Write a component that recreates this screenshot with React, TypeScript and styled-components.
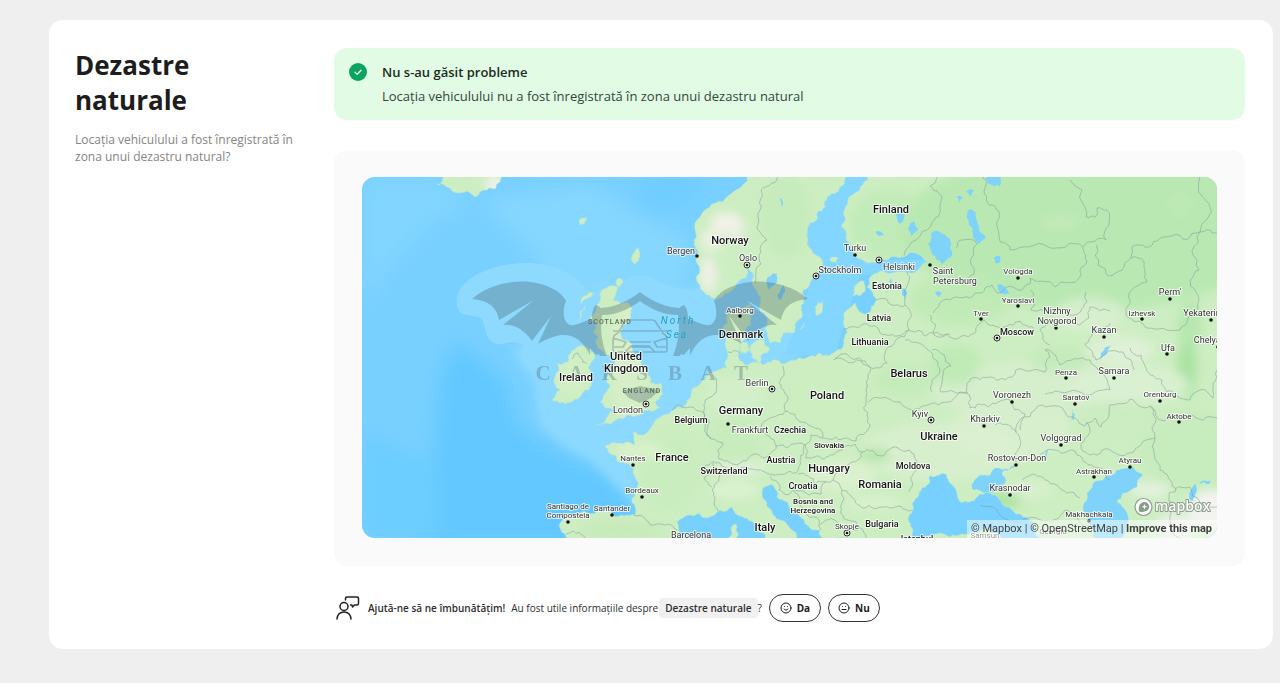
import React from 'react';
import styled, { createGlobalStyle } from 'styled-components';
import { Smile, Meh } from 'lucide-react';

type Point = [number, number];

const GlobalStyle = createGlobalStyle`
  *, *::before, *::after { box-sizing: border-box; }
  body {
    margin: 0;
    background: #efefef;
    color: #1d1d1d;
    font-family: 'Open Sans', 'Noto Sans', sans-serif;
  }
`;

const Page = styled.main`
  padding: 20px 7px 34px 49px;
`;

const Card = styled.section`
  display: grid;
  grid-template-columns: 224px minmax(0, 1fr);
  column-gap: 35px;
  padding: 28px 28px 27px 26px;
  background: #fff;
  border-radius: 14px;
`;

const Title = styled.h1`
  margin: 0 0 13px;
  max-width: 160px;
  font-size: 26px;
  line-height: 35px;
  font-weight: 700;
`;

const Intro = styled.p`
  margin: 0;
  font-size: 12px;
  line-height: 17px;
  color: #858585;
`;

const Alert = styled.div`
  display: flex;
  gap: 15px;
  padding: 12px 15px;
  border-radius: 13px;
  background: #e2fbe5;
  font-size: 13px;
  line-height: 24px;
`;

const AlertIcon = styled.svg`
  flex: none;
  width: 18px;
  height: 18px;
  margin-top: 3px;
`;

const AlertTitle = styled.h2`
  margin: 0;
  font-size: 13px;
  font-weight: 600;
  color: #1c2b21;
`;

const AlertText = styled.p`
  margin: 0;
  color: #33453a;
`;

const MapPanel = styled.div`
  margin-top: 30px;
  padding: 27px 28px 28px;
  border-radius: 13px;
  background: #fafafa;
`;

const MapFrame = styled.div`
  position: relative;
  aspect-ratio: 855 / 361;
  overflow: hidden;
  border-radius: 13px;
`;

const MapDrawing = styled.svg`
  display: block;
  width: 100%;
  height: 100%;
  font-family: Roboto, sans-serif;
`;

const MapLogo = styled.svg`
  position: absolute;
  right: 6px;
  bottom: 20px;
  width: 78px;
  height: 22px;
  font-family: 'Open Sans', sans-serif;
`;

const Attribution = styled.div`
  position: absolute;
  right: 0;
  bottom: 0;
  padding: 0 5px 0 4px;
  background: rgba(255, 255, 255, 0.5);
  color: #404040;
  font: 11px/18px Roboto, sans-serif;
  white-space: nowrap;
`;

const AttributionLink = styled.a<{ $bold?: boolean }>`
  color: inherit;
  text-decoration: none;
  font-weight: ${({ $bold }) => ($bold ? 700 : 400)};
`;

const Feedback = styled.div`
  display: flex;
  flex-wrap: wrap;
  align-items: center;
  margin-top: 28px;
  padding-left: 1px;
  font-size: 10px;
  line-height: 20px;
  color: #2e2e2e;
`;

const FeedbackIcon = styled.svg`
  width: 26px;
  height: 26px;
  margin-right: 7px;
`;

const FeedbackLead = styled.strong`
  margin-right: 6px;
  font-weight: 600;
`;

const Topic = styled.span`
  margin-left: 1px;
  padding: 0 6px;
  border-radius: 4px;
  background: #f0f0f0;
  font-weight: 600;
`;

const AnswerButton = styled.button`
  display: inline-flex;
  align-items: center;
  justify-content: center;
  gap: 5px;
  width: 52px;
  height: 28px;
  margin-left: 7px;
  padding: 0;
  border: 1px solid #333;
  border-radius: 14px;
  background: #fff;
  color: #1d1d1d;
  font: 700 10px/16px 'Open Sans', sans-serif;
`;

/* Fractal subdivision gives coasts and borders a natural, irregular edge. */
function rough(points: Point[], closed: boolean, amount = 0.22): string {
  let seed = Math.round(points[0][0] * 13 + points[0][1] * 7);
  const random = () => {
    seed = (seed * 16807 + 11) % 2147483647;
    return seed / 2147483647 - 0.5;
  };
  let line = closed ? [...points, points[0]] : points;
  for (let pass = 0; pass < 3; pass++) {
    const next: Point[] = [line[0]];
    for (let i = 1; i < line.length; i++) {
      const [ax, ay] = line[i - 1];
      const [bx, by] = line[i];
      const length = Math.hypot(bx - ax, by - ay);
      if (length > 4 && length < 90) {
        const shift = random() * amount * 2;
        next.push([(ax + bx) / 2 - (by - ay) * shift, (ay + by) / 2 + (bx - ax) * shift]);
      }
      next.push([bx, by]);
    }
    line = next;
  }
  return 'M' + line.map(([x, y]) => `${x.toFixed(1)} ${y.toFixed(1)}`).join('L') + (closed ? 'Z' : '');
}

const parse = (text: string): Point[] =>
  text.split(' ').map((pair) => pair.split(',').map(Number) as Point);

const land = [
  // Norway and Sweden
  '748,170 740,188 728,196 715,203 703,212 695,223 694,240 697,257 700,270 698,283 705,293 713,298 725,293 737,283 746,278 748,268 752,282 757,292 760,303 767,320 768,337 770,343 780,343 783,333 795,332 802,317 804,303 803,290 810,282 818,273 823,263 813,253 808,240 808,227 817,213 827,197 840,187 847,170',
  // Finland, the continent and Russia
  '869,170 860,187 848,200 845,217 846,237 852,248 857,258 870,263 887,260 907,255 920,255 929,263 920,268 907,272 887,273 870,277 867,287 873,293 875,303 870,312 862,313 855,303 847,310 843,322 844,343 835,352 820,353 800,358 783,364 773,360 763,365 753,362 744,364 738,356 741,344 745,330 751,325 748,313 751,303 740,309 727,314 722,330 726,340 728,355 727,368 713,372 703,380 693,388 687,400 673,410 663,415 653,425 643,435 633,432 635,445 623,444 605,447 613,455 627,463 635,477 637,490 635,515 613,515 587,513 567,513 560,523 565,545 677,545 677,522 690,515 707,518 720,510 732,507 743,517 757,528 770,545 797,545 780,520 765,500 763,488 773,485 777,497 793,513 820,530 827,545 915,545 913,530 912,513 918,497 930,482 930,475 947,475 950,483 957,493 962,503 977,497 990,493 1007,507 1023,517 1033,521 1042,545 1230,545 1230,170',
  // Great Britain
  '602,290 618,288 613,300 630,305 628,320 620,333 632,345 635,355 647,372 650,382 661,383 663,394 655,403 660,408 640,415 627,415 613,422 597,425 607,417 615,410 600,402 603,397 610,387 606,378 614,369 613,357 604,354 597,345 598,336 593,332 596,325 590,318 597,305',
  // Ireland
  '577,347 590,350 595,358 588,368 591,380 589,390 580,397 560,403 552,400 560,390 555,377 557,363 568,362',
  // Iceland
  '443,170 443,178 437,185 450,188 460,193 475,197 487,190 500,182 513,170',
  // Smaller islands
  '593,293 588,298 581,304 584,296', '585,306 580,312 578,322 582,316', '619,278 623,282 619,287 616,283',
  '634,253 639,248 635,264 632,261', '579,221 587,218 584,224 580,225', '823,302 817,316 815,307',
  '750,347 764,340 770,349 760,363 752,357', '739,344 747,343 749,351 741,353', '854,290 864,281 865,291 853,296',
  '830,259 838,258 836,262 830,261', '731,528 736,524 735,545 729,545', '804,323 800,330 804,326',
  '915,545 950,537 973,532 1002,538 1002,545',
];

const lakes = [
  '973,490 980,475 997,468 1015,465 1002,473 1005,483 988,492',
  '1087,493 1103,480 1117,470 1133,467 1143,475 1137,487 1123,493 1117,502 1127,513 1123,545 1097,545 1090,520 1083,507',
  '931,234 938,231 947,237 952,251 950,258 942,264 932,254 928,244',
  '968,210 976,212 979,227 986,238 979,244 973,234 969,225',
  '985,174 1002,174 1000,186 988,184', '997,285 1004,286 1009,294 1000,293', '994,258 1000,256 1000,262 995,263',
  '768,277 777,274 777,282 769,290', '784,285 783,294 779,300 780,290', '966,191 974,190 971,197',
  '957,196 963,198 959,203', '935,292 942,293 939,297', '891,277 889,289 886,294', '876,231 884,235 879,236',
  '896,213 905,215 900,224', '908,228 914,221 918,230 911,236', '1101,353 1112,345 1107,353 1099,360',
  '1190,500 1192,488 1196,484 1193,501', '1199,484 1211,481 1209,484', '1045,457 1050,447 1047,460',
  '779,198 783,202 782,207', '1072,409 1074,420 1071,419', '902,288 907,292 905,300 902,295',
];

const borders = [
  '778,176 772,183 761,190 761,208 758,230 767,240 761,252 761,264 756,273 755,283',
  '938,176 930,186 940,205 931,226 904,256', '907,272 904,290 905,305 890,304 875,299', '905,305 909,330 897,336 880,333 850,327 844,329',
  '909,330 925,336 950,334', '909,330 896,340 886,350 887,363 870,367 858,358 835,358', '783,366 781,378 787,395 786,411 770,418 761,427 776,446',
  '786,411 800,422 821,430 822,438 836,437 856,441 868,418 866,397 871,368 865,361 833,360', '868,402 880,398 900,402 930,404 960,392 968,392',
  '932,392 940,370 931,352 905,340', '713,375 713,395 705,400 705,420 711,439 723,443 719,459 740,463 765,458 776,446 794,444 805,445 811,435 822,438',
  '672,410 690,407 703,412 707,430 711,439', '705,466 720,463 730,470 752,469 773,475 796,473 800,460 805,445', '805,445 806,458 824,459 842,450 855,444 862,452 849,464 833,480 815,484 798,474',
  '718,470 712,490 718,511', '713,463 704,478 712,487', '862,452 882,456 898,448 914,454 919,466 911,480 909,492', '833,480 842,490 855,500 862,508 890,508 912,510',
  '770,476 779,490 798,491 821,494 826,482', '794,491 800,505 819,520 821,530', '842,490 841,505 848,520 860,528 866,538', '820,525 835,520 846,532 858,530',
  '634,515 650,525 665,525 677,530', '566,534 580,533 586,538',
  '983,176 984,192 995,206 998,230 1010,250 1048,247 1083,247 1090,242 1106,240 1107,210 1097,208 1095,217 1086,217 1082,190 1070,180',
  '1200,176 1200,232 1172,236 1150,247 1132,247 1131,258 1108,276 1098,265 1097,245', '1200,232 1217,233',
  '956,248 962,240 977,244 974,274 960,278', '933,313 950,300 975,293 992,285 997,293 1022,290 1030,284 1030,278 1080,277 1086,255 1083,247',
  '1030,290 1031,310 1070,315 1087,302 1086,292', '930,315 934,335 960,337 976,332 984,320 1005,327 1020,321 1035,330', '1131,258 1144,262 1147,282 1129,294 1129,318 1147,328 1180,330 1190,315 1199,300 1190,280 1199,270 1200,232',
  '932,350 951,366 942,382 941,392 966,392 970,408 988,407 1010,400 1025,414 1020,430', '966,392 972,378 988,377 1005,380 1030,371 1045,372 1050,357 1045,350', '1045,350 1060,365 1090,360 1098,370 1110,390 1090,395 1055,391 1045,394',
  '995,425 1015,430 1019,435 1018,450 1016,462', '1016,432 1035,410 1065,412 1085,426 1095,418 1101,427 1110,405 1130,399 1150,406 1160,420 1190,415 1217,418',
  '1086,422 1081,448 1090,455 1115,453 1138,447 1155,438 1160,470 1172,486 1176,490', '1150,406 1152,428 1155,438', '1040,455 1055,450 1080,456 1100,468 1110,480', '1169,493 1190,487 1217,507', '1169,493 1170,520 1180,538',
  '980,505 1000,515 1040,520 1065,510 1086,529', '1022,480 1040,476 1062,490 1080,498', '1110,323 1095,330 1085,345 1096,360 1123,352 1134,370', '1130,348 1146,368 1162,380 1178,397 1190,400', '1190,400 1200,390 1213,398 1217,370',
  '728,352 740,353', '572,359 578,353 581,358 587,364', '1050,345 1040,330 1060,322 1080,325 1090,307 1110,311',
];

const terrain: [number, number, number, number, string, number][] = [
  [725, 222, 15, 10, '#f3f2ea', 0.9], [712, 240, 12, 12, '#f0f3e6', 0.8], [708, 275, 9, 18, '#f5f0ee', 0.8], [735, 228, 10, 12, '#f3f1ee', 0.7],
  [785, 215, 24, 40, '#c2eab7', 0.6], [890, 225, 40, 35, '#bce9b3', 0.7],
  [1090, 230, 190, 80, '#b9e8b2', 1], [960, 300, 50, 25, '#bdeab4', 0.8], [1090, 315, 35, 18, '#d9efd0', 0.8], [1120, 350, 35, 15, '#e2f0da', 0.8],
  [1060, 222, 18, 6, '#c9ebbd', 0.7], [1180, 205, 12, 12, '#c2eab7', 0.6],
  [1187, 368, 10, 30, '#a7e2a0', 0.9], [1190, 325, 12, 25, '#b0e6aa', 0.8], [940, 452, 80, 30, '#dbf0d1', 0.7], [1010, 430, 60, 30, '#dbf0d1', 0.7],
  [1040, 390, 110, 30, '#d7eecd', 0.8], [1130, 385, 60, 20, '#dcf0d3', 0.8], [1060, 360, 30, 12, '#c2eab9', 0.8], [955, 365, 25, 20, '#b9e8b0', 0.7],
  [1190, 450, 50, 40, '#c6ebbc', 0.8], [1120, 420, 50, 20, '#caecc0', 0.8], [1005, 500, 18, 8, '#a8e2a0', 0.9], [1030, 490, 24, 9, '#dbf0d0', 0.8],
  [1210, 510, 22, 20, '#f4f3f2', 0.95], [1175, 527, 20, 14, '#eff1eb', 0.9], [1150, 490, 20, 8, '#e8f2e3', 0.8], [740, 468, 26, 7, '#e5efdf', 0.8],
  [875, 455, 15, 8, '#ade2a2', 0.7], [840, 475, 35, 16, '#dff2d3', 0.7], [875, 503, 28, 6, '#dff2d3', 0.8], [670, 470, 30, 40, '#c9ecbe', 0.7],
  [640, 450, 25, 8, '#def2cf', 0.7], [735, 440, 25, 25, '#c5ebb9', 0.6], [735, 395, 30, 18, '#d6f0cd', 0.7], [830, 400, 35, 25, '#cbeec0', 0.6],
  [905, 380, 30, 15, '#c0eab6', 0.7], [735, 490, 25, 9, '#e0f3d5', 0.7],
  [620, 530, 40, 10, '#c5eab9', 0.8], [495, 184, 10, 8, '#f4f3f2', 0.9], [630, 360, 20, 60, '#dcf0cb', 0.7], [573, 375, 18, 20, '#d6f0c8', 0.6],
];

type Label = { lines: string[]; x: number; y: number; size?: number; country?: boolean; dot?: Point; capital?: boolean };
const labels: Label[] = [
  { lines: ['Finland'], x: 891, y: 213, size: 11, country: true }, { lines: ['Norway'], x: 730, y: 244, size: 11, country: true },
  { lines: ['Denmark'], x: 741, y: 338, size: 11, country: true }, { lines: ['Estonia'], x: 887, y: 289, size: 9, country: true },
  { lines: ['Latvia'], x: 879, y: 321, size: 9, country: true }, { lines: ['Lithuania'], x: 870, y: 345, size: 9, country: true },
  { lines: ['Belarus'], x: 909, y: 377, size: 11, country: true }, { lines: ['Poland'], x: 827, y: 399, size: 11, country: true },
  { lines: ['Germany'], x: 741, y: 414, size: 11, country: true }, { lines: ['Belgium'], x: 691, y: 423, size: 9, country: true },
  { lines: ['Czechia'], x: 790, y: 433, size: 9, country: true }, { lines: ['Slovakia'], x: 829, y: 448, size: 8, country: true },
  { lines: ['Austria'], x: 781, y: 463, size: 9, country: true }, { lines: ['Switzerland'], x: 724, y: 474, size: 9, country: true },
  { lines: ['Hungary'], x: 829, y: 472, size: 11, country: true }, { lines: ['Croatia'], x: 803, y: 489, size: 9, country: true },
  { lines: ['Bosnia and', 'Herzegovina'], x: 813, y: 504, size: 8, country: true }, { lines: ['Romania'], x: 880, y: 488, size: 11, country: true },
  { lines: ['Moldova'], x: 913, y: 469, size: 9, country: true }, { lines: ['Bulgaria'], x: 882, y: 527, size: 9, country: true },
  { lines: ['Italy'], x: 765, y: 531, size: 11, country: true }, { lines: ['France'], x: 672, y: 461, size: 11, country: true },
  { lines: ['Ukraine'], x: 939, y: 440, size: 11, country: true }, { lines: ['United', 'Kingdom'], x: 626, y: 360, size: 11, country: true },
  { lines: ['Ireland'], x: 576, y: 381, size: 11, country: true }, { lines: ['Moscow'], x: 1017, y: 335, size: 9, country: true, dot: [997, 338], capital: true },
  { lines: ['Istanbul'], x: 917, y: 542, size: 9, country: true },
  { lines: ['Bergen'], x: 681, y: 254, dot: [697, 256] }, { lines: ['Oslo'], x: 748, y: 261, dot: [747, 265], capital: true },
  { lines: ['Stockholm'], x: 840, y: 273, dot: [816, 276], capital: true }, { lines: ['Turku'], x: 855, y: 251, dot: [855, 255] },
  { lines: ['Helsinki'], x: 899, y: 270, dot: [879, 260], capital: true }, { lines: ['Saint'], x: 943, y: 274, dot: [930, 265] },
  { lines: ['Petersburg'], x: 955, y: 284 }, { lines: ['Aalborg'], x: 740, y: 313, dot: [740, 316], size: 8 },
  { lines: ['Vologda'], x: 1018, y: 274, dot: [1018, 278], size: 8 }, { lines: ['Yaroslavl'], x: 1018, y: 303, dot: [1018, 306], size: 8 },
  { lines: ['Tver'], x: 981, y: 316, dot: [981, 319], size: 8 }, { lines: ['Nizhny', 'Novgorod'], x: 1057, y: 314, dot: [1056, 328] },
  { lines: ['Kazan'], x: 1104, y: 333, dot: [1104, 337] }, { lines: ['Izhevsk'], x: 1142, y: 316, dot: [1142, 319], size: 8 },
  { lines: ["Perm'"], x: 1170, y: 295, dot: [1170, 299] }, { lines: ['Yekaterinburg'], x: 1211, y: 316, dot: [1211, 320] },
  { lines: ['Chelyabinsk'], x: 1218, y: 343, dot: [1218, 347] }, { lines: ['Ufa'], x: 1168, y: 351, dot: [1167, 354] },
  { lines: ['Penza'], x: 1066, y: 375, dot: [1066, 378], size: 8 }, { lines: ['Samara'], x: 1114, y: 374, dot: [1114, 378] },
  { lines: ['Voronezh'], x: 1012, y: 398, dot: [1012, 402] }, { lines: ['Saratov'], x: 1076, y: 400, dot: [1075, 404], size: 8 },
  { lines: ['Orenburg'], x: 1160, y: 397, dot: [1160, 401], size: 8 }, { lines: ['Aktobe'], x: 1179, y: 419, dot: [1179, 422], size: 8 },
  { lines: ['Kharkiv'], x: 985, y: 422, dot: [984, 426] }, { lines: ['Kyiv'], x: 920, y: 417, dot: [931, 420], capital: true },
  { lines: ['Volgograd'], x: 1061, y: 441, dot: [1061, 445] }, { lines: ['Rostov-on-Don'], x: 1017, y: 461, dot: [1016, 465] },
  { lines: ['Krasnodar'], x: 1010, y: 491, dot: [1010, 495] }, { lines: ['Astrakhan'], x: 1094, y: 474, dot: [1094, 477], size: 8 },
  { lines: ['Atyrau'], x: 1130, y: 463, dot: [1130, 467], size: 8 }, { lines: ['Makhachkala'], x: 1089, y: 517, dot: [1089, 521], size: 8 },
  { lines: ['Berlin'], x: 757, y: 386, dot: [772, 389], capital: true }, { lines: ['Frankfurt'], x: 750, y: 433, dot: [728, 424] },
  { lines: ['London'], x: 628, y: 413, dot: [646, 404], capital: true }, { lines: ['Nantes'], x: 633, y: 461, dot: [633, 465], size: 8 },
  { lines: ['Bordeaux'], x: 642, y: 493, dot: [642, 497], size: 8 }, { lines: ['Santander'], x: 612, y: 511, dot: [612, 515], size: 8 },
  { lines: ['Santiago de', 'Compostela'], x: 568, y: 509, dot: [568, 522], size: 8 }, { lines: ['Skopje'], x: 847, y: 529, dot: [847, 533], capital: true, size: 8 },
  { lines: ['Barcelona'], x: 691, y: 538 }, { lines: ['Samsun'], x: 985, y: 538, size: 8 }, { lines: ['Georgia'], x: 1053, y: 534, size: 8 },
];

function PlaceLabel({ lines, x, y, size = 9, country, dot, capital }: Label) {
  return (
    <g>
      {dot && capital && <circle cx={dot[0]} cy={dot[1]} r="3" fill="#eee" stroke="#333" strokeWidth="1" />}
      {dot && <circle cx={dot[0]} cy={dot[1]} r={capital ? 1.3 : 1.8} fill="#111" />}
      {lines.map((line, i) => (
        <text
          key={line} x={x} y={y + i * (size + 1)} fontSize={size} fontWeight={country ? 500 : 400} textAnchor="middle"
          fill={country ? '#151515' : '#333'} stroke="#fff" strokeOpacity="0.75" strokeWidth="2" strokeLinejoin="round" paintOrder="stroke"
        >
          {line}
        </text>
      ))}
    </g>
  );
}

const leftWing =
  'M472 299C488 285 512 280 530 282C548 284 562 292 566 301C562 311 563 322 570 325C576 326 584 321 592 319C592 310 594 307 596 305L600 307C597 322 599 340 605 352L596 355L590 348L590 355C582 340 574 334 561 335C550 337 543 341 538 344L551 316L532 341C525 330 513 323 503 325L534 300L499 320C497 307 488 300 472 299Z';

function Watermark() {
  return (
    <g>
      <g fill="#36505c" opacity="0.29">
        <path d={leftWing} />
        <path d={leftWing} transform="matrix(-1 0 0 1 1280 0)" />
        <path d="M594 308C612 309 627 302 640 292C653 302 668 309 686 308C689 325 685 342 680 356L673 356C679 341 680 327 678 315C663 315 651 309 640 301C629 309 617 315 602 315C600 327 601 341 607 356L600 356C595 342 591 325 594 308Z" />
        <path d="M622 391L640 386L660 390L651 398L640 403L629 398Z" />
      </g>
      <g fill="none" stroke="#4f6870" strokeOpacity="0.34" strokeWidth="1.6" strokeLinejoin="round">
        <path d="M618 333L625 321Q626 320 628 320H652Q654 320 655 321L663 333M620 331H660M613 331H619M661 331H667M618 333Q613 335 613 340V350Q613 352 615 352H665Q667 352 667 350V340Q667 335 662 333M613 338L626 342L623 347H614M667 338L654 342L657 347H666M630 342H651M630 346H650M625 352L630 347H650L655 352" />
      </g>
      <g fontFamily="'Liberation Serif', serif" fontSize="21" fontWeight="700" fill="#506874" fillOpacity="0.36" textAnchor="middle">
        {['C', 'A', 'R', 'S', 'B', 'A', 'T'].map((letter, i) => (
          <text key={i} x={543 + i * 33} y="380">{letter}</text>
        ))}
      </g>
    </g>
  );
}

function EuropeMap() {
  return (
    <MapDrawing viewBox="362 177 855 361" preserveAspectRatio="xMidYMid slice" role="img" aria-label="Europa">
      <defs>
        <filter id="soft" x="-30%" y="-30%" width="160%" height="160%"><feGaussianBlur stdDeviation="5" /></filter>
        <filter id="depth" x="-30%" y="-30%" width="160%" height="160%"><feGaussianBlur stdDeviation="10" /></filter>
        <filter id="shelf" x="-30%" y="-30%" width="160%" height="160%"><feGaussianBlur stdDeviation="4" /></filter>
        <clipPath id="landClip">{land.map((shape) => <path key={shape} d={rough(parse(shape), true)} />)}</clipPath>
      </defs>
      <rect x="362" y="177" width="855" height="361" fill="#78d0ff" />
      <g filter="url(#depth)">
        <path d="M362 177H445L470 205L430 225L390 270L362 310Z" fill="#81d5ff" />
        <path d="M480 200L590 185L640 215L690 240V330L560 340L540 260Z" fill="#86d7ff" />
        <path d="M640 170H710L690 205L640 215Z" fill="#6fcdff" />
        <path d="M455 340L505 380L520 430L565 455L610 475L640 515L560 545H420L435 450L440 380Z" fill="#62c8ff" />
        <path d="M362 430L440 470V538H362Z" fill="#6ccdff" />
      </g>
      <g fill="#8cd9ff" filter="url(#shelf)">
        <path d="M560 330L600 285L690 290L720 270V400L660 430L632 440L640 508L612 482L590 460L562 445L540 425L532 380L510 350Z" />
        <path d="M700 270L800 265V360L740 375L690 380Z" />
      </g>
      <path
        fill="#8edaff"
        d="M457 306C452 276 500 262 530 263C562 265 575 278 588 290C598 297 612 292 618 285C628 275 646 272 658 281C672 292 700 292 718 284L735 330L700 370H540C525 375 520 358 524 346C512 338 505 346 497 344C484 341 487 327 481 318C470 314 460 318 457 306Z"
      />
      <path d="M805 170H875V260H935V275H860L835 355H785L810 285L800 250Z" fill="#82d6ff" />
      {land.map((shape) => (
        <path key={shape} d={rough(parse(shape), true)} fill="#cdeec2" stroke="#b5e4cf" strokeWidth="0.6" />
      ))}
      <g clipPath="url(#landClip)">
        <g filter="url(#soft)">
          {terrain.map(([cx, cy, rx, ry, fill, opacity], i) => (
            <ellipse key={i} cx={cx} cy={cy} rx={rx} ry={ry} fill={fill} opacity={opacity} />
          ))}
        </g>
      </g>
      {lakes.map((shape) => <path key={shape} d={rough(parse(shape), true)} fill="#7fd3fb" />)}
      <g fill="none" stroke="#7f9a98" strokeOpacity="0.65" strokeWidth="0.8">
        {borders.map((line) => <path key={line} d={rough(parse(line), false)} />)}
      </g>
      <Watermark />
      <g fontSize="10" fontStyle="italic" fill="#22a3bf" textAnchor="middle">
        <text x="678" y="324" letterSpacing="2">North</text>
        <text x="677" y="338" letterSpacing="2">Sea</text>
      </g>
      <g fontSize="7" fontWeight="500" fill="#5d6b60" textAnchor="middle" letterSpacing="1">
        <text x="610" y="324">SCOTLAND</text>
        <text x="642" y="393">ENGLAND</text>
      </g>
      {labels.map((label) => <PlaceLabel key={label.lines[0]} {...label} />)}
    </MapDrawing>
  );
}

export default function App() {
  return (
    <>
      <GlobalStyle />
      <Page>
        <Card>
          <header>
            <Title>Dezastre naturale</Title>
            <Intro>Locația vehiculului a fost înregistrată în zona unui dezastru natural?</Intro>
          </header>
          <div>
            <Alert role="status">
              <AlertIcon viewBox="0 0 18 18" aria-hidden="true">
                <circle cx="9" cy="9" r="9" fill="#0ba360" />
                <path d="M6 9.200L8.200 11.200L12 7.200" fill="none" stroke="#e6ffea" strokeWidth="1.4" strokeLinecap="round" strokeLinejoin="round" />
              </AlertIcon>
              <div>
                <AlertTitle>Nu s-au găsit probleme</AlertTitle>
                <AlertText>Locația vehiculului nu a fost înregistrată în zona unui dezastru natural</AlertText>
              </div>
            </Alert>
            <MapPanel>
              <MapFrame>
                <EuropeMap />
                <MapLogo viewBox="0 0 78 22" role="img" aria-label="Mapbox">
                  <circle cx="10.500" cy="11" r="8.500" fill="#fff" fillOpacity="0.9" stroke="#8c9c8c" strokeWidth="1.2" />
                  <path d="M6 15.500C5 9.500 7.500 6 11.500 6A4.700 4.700 0 0 1 11.500 15.400C9 16.200 7 16 6 15.500Z" fill="#8c9c8c" />
                  <path d="M11.500 8L12.300 9.900L14.200 10.700L12.300 11.500L11.500 13.400L10.700 11.500L8.800 10.700L10.700 9.900Z" fill="#fff" />
                  <text x="22" y="15" fontSize="14" fontWeight="600" fill="#fff" stroke="#8c9c8c" strokeWidth="2" strokeLinejoin="round" paintOrder="stroke">mapbox</text>
                </MapLogo>
                <Attribution>
                  <AttributionLink href="#mapbox">© Mapbox</AttributionLink> | <AttributionLink href="#osm">© OpenStreetMap</AttributionLink> |{' '}
                  <AttributionLink href="#improve" $bold>Improve this map</AttributionLink>
                </Attribution>
              </MapFrame>
            </MapPanel>
            <Feedback>
              <FeedbackIcon viewBox="0 0 26 26" fill="none" stroke="#222" strokeWidth="1.5" strokeLinecap="round" strokeLinejoin="round" aria-hidden="true">
                <circle cx="9" cy="11.500" r="4" />
                <path d="M2 24C2.500 19 5 17 9 17S15.500 19 16 24" />
                <path d="M10.500 5V3.500Q10.500 2 12 2H22Q23.500 2 23.500 3.500V8.500Q23.500 10 22 10H19.500L17.500 12L17 10H15.500" />
              </FeedbackIcon>
              <FeedbackLead>Ajută-ne să ne îmbunătățim!</FeedbackLead>
              <span>Au fost utile informațiile despre</span>
              <Topic>Dezastre naturale</Topic>
              <span>?</span>
              <AnswerButton type="button"><Smile size={12} strokeWidth={2} aria-hidden="true" />Da</AnswerButton>
              <AnswerButton type="button"><Meh size={12} strokeWidth={2} aria-hidden="true" />Nu</AnswerButton>
            </Feedback>
          </div>
        </Card>
      </Page>
    </>
  );
}
